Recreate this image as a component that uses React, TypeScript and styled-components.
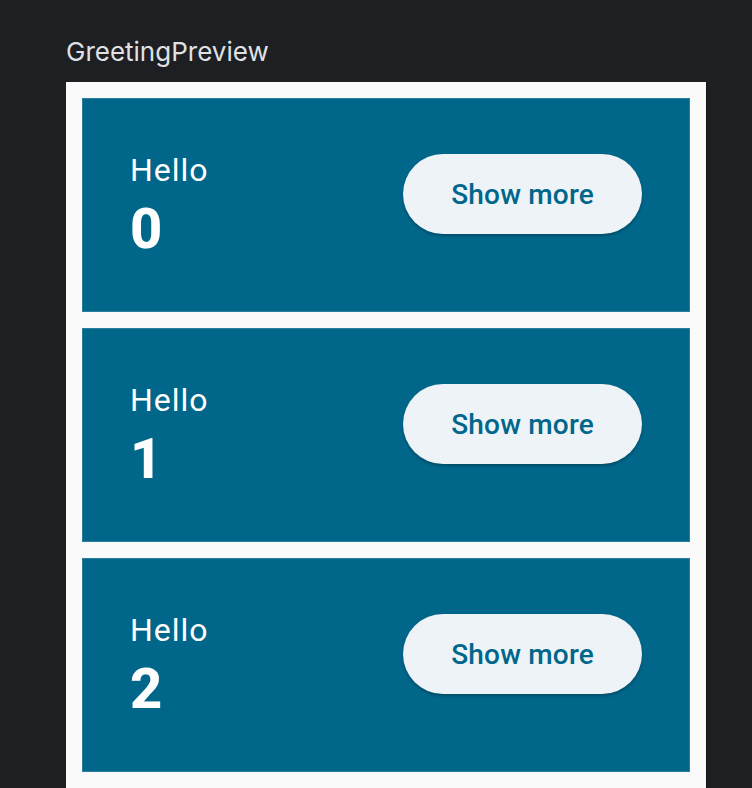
import { createGlobalStyle, styled } from 'styled-components';

const GlobalStyle = createGlobalStyle`
  html, body {
    margin: 0;
    padding: 0;
    background: #1e1f22;
    overflow: hidden;
  }
`;

const names = ['0', '1', '2', '3'];

function Greeting({ name }: { name: string }) {
  return (
    <Card>
      <Texts>
        <HelloText>Hello</HelloText>
        <NameText>{name}</NameText>
      </Texts>
      <TouchTarget>
        <ShowMoreButton>Show more</ShowMoreButton>
      </TouchTarget>
    </Card>
  );
}

export default function App() {
  return (
    <>
      <GlobalStyle />
      <Page>
        <PreviewTitle>GreetingPreview</PreviewTitle>
        <PreviewFrame>
          {names.map((name) => (
            <Greeting key={name} name={name} />
          ))}
        </PreviewFrame>
      </Page>
    </>
  );
}

const Page = styled.div`
  height: 788px;
  padding: 36px 0 0 66px;
  box-sizing: border-box;
  overflow: hidden;
`;

const PreviewTitle = styled.div`
  font-family: Inter, 'Noto Sans', sans-serif;
  font-size: 26px;
  line-height: 32px;
  color: #dfe1e5;
  margin-bottom: 14px;
`;

const PreviewFrame = styled.div`
  width: 640px;
  background: #fafafa;
  padding: 16px 16px;
  box-sizing: border-box;
  display: flex;
  flex-direction: column;
  gap: 16px;
  box-shadow: 1px 0 0 #141517;
`;

const Card = styled.div`
  background: #00668a;
  display: flex;
  align-items: flex-start;
  padding: 48px;
  height: 214px;
  box-sizing: border-box;
  box-shadow: 0 0 0 1px rgba(120, 170, 190, 0.35) inset;
`;

const Texts = styled.div`
  flex: 1;
  display: flex;
  flex-direction: column;
  font-family: Roboto, 'Liberation Sans', sans-serif;
  color: #ffffff;
`;

const HelloText = styled.div`
  font-size: 32px;
  line-height: 48px;
  letter-spacing: 1px;
`;

const NameText = styled.div`
  font-size: 56px;
  line-height: 70px;
  font-weight: 800;
`;

const TouchTarget = styled.div`
  height: 96px;
  display: flex;
  align-items: center;
`;

const ShowMoreButton = styled.button`
  height: 80px;
  padding: 0 48px;
  border: none;
  border-radius: 40px;
  background: #eef3f8;
  color: #00668a;
  font-family: Roboto, 'Liberation Sans', sans-serif;
  font-size: 28px;
  font-weight: 500;
  letter-spacing: 0.2px;
  box-shadow: 0 2px 3px rgba(0, 0, 0, 0.25);
  cursor: pointer;
`;
